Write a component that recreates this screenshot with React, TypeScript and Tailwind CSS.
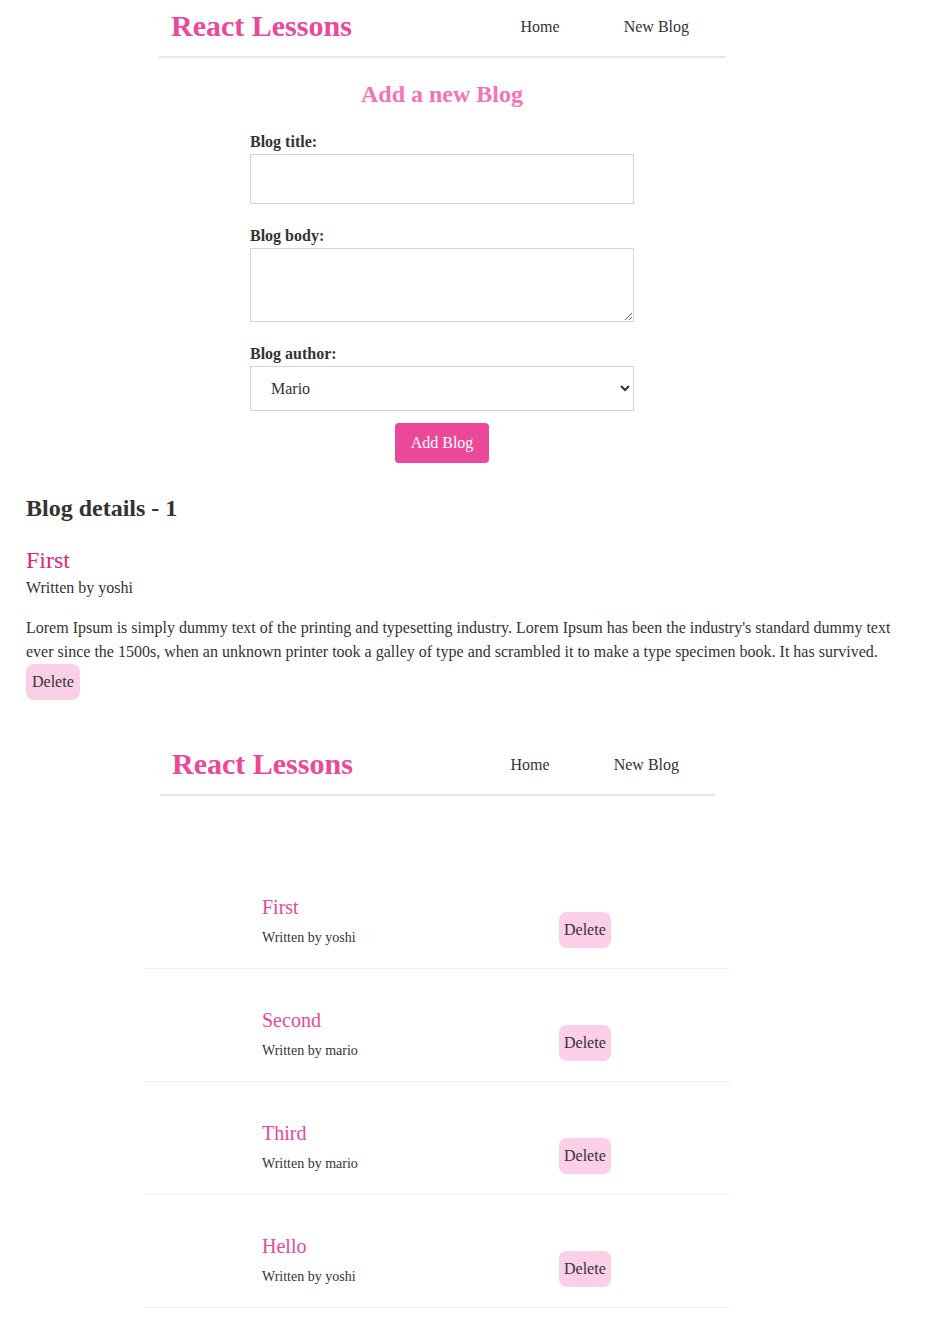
import React from "react";

type NavProps = { frame: string };

function Navbar({ frame }: NavProps) {
  return (
    <nav className={`flex items-center h-[58px] border-b-2 border-[#e5e7eb] pl-[12px] pr-[36px] ${frame}`}>
      <h1 className="text-[30px] leading-[36px] font-bold text-[#ec4899] -mt-[4px]">React Lessons</h1>
      <div className="ml-auto flex gap-[64px] text-[16px] text-[#333] -mt-[3px]">
        <a href="#">Home</a>
        <a href="#">New Blog</a>
      </div>
    </nav>
  );
}

const blogs = [
  { id: 1, title: "First", author: "yoshi" },
  { id: 2, title: "Second", author: "mario" },
  { id: 3, title: "Third", author: "mario" },
  { id: 4, title: "Hello", author: "yoshi" },
];

const body =
  "Lorem Ipsum is simply dummy text of the printing and typesetting industry. Lorem Ipsum has been the industry's standard dummy text ever since the 1500s, when an unknown printer took a galley of type and scrambled it to make a type specimen book. It has survived.";

export default function App() {
  return (
    <div className="bg-white text-[#333] font-['Liberation_Serif',serif] pb-[16px]">
      {/* Create page */}
      <Navbar frame="ml-[159px] w-[566px]" />
      <div className="ml-[159px] w-[566px]">
        <h2 className="text-center text-[24px] leading-[28px] font-bold text-[#f472b6] mt-[22px] mb-[22px]">
          Add a new Blog
        </h2>
        <form className="w-[384px] mx-auto flex flex-col">
          <label className="font-bold text-[16px] leading-[24px]">Blog title:</label>
          <input type="text" className="h-[50px] border border-[#d1d5db] px-[10px] outline-none" />
          <label className="font-bold text-[16px] leading-[24px] mt-[20px]">Blog body:</label>
          <textarea className="h-[74px] border border-[#d1d5db] px-[10px] outline-none" />
          <label className="font-bold text-[16px] leading-[24px] mt-[20px]">Blog author:</label>
          <select className="h-[45px] border border-[#d1d5db] pl-[16px] pr-[6px] text-[16px] outline-none bg-white">
            <option>Mario</option>
            <option>Yoshi</option>
          </select>
          <button
            type="button"
            className="mt-[12px] mx-auto w-[94px] h-[40px] rounded-[4px] bg-[#ec4899] text-white text-[16px]"
          >
            Add Blog
          </button>
        </form>
      </div>

      {/* Blog details */}
      <div className="pl-[26px] pr-[52px] mt-[29px]">
        <h2 className="text-[24px] leading-[32px] font-bold">Blog details - 1</h2>
        <article className="mt-[20px]">
          <h2 className="text-[24px] leading-[32px] text-[#db2777]">First</h2>
          <div className="text-[16px] leading-[24px]">Written by yoshi</div>
          <p className="mt-[16px] text-[16px] leading-[24px]">{body}</p>
          <button type="button" className="h-[36px] px-[6px] rounded-[8px] bg-[#fbcfe8] text-[16px]">
            Delete
          </button>
        </article>
      </div>

      {/* Home page */}
      <Navbar frame="ml-[160px] w-[555px] mt-[38px]" />
      <div className="ml-[144px] w-[586px] mt-[60px]">
        {blogs.map((b) => (
          <div key={b.id} className="flex h-[113px] border-b border-[#f0f0f0] pl-[118px] pt-[39px]">
            <div className="w-[297px]">
              <h2 className="text-[20px] leading-[24px] text-[#ec4899]">{b.title}</h2>
              <p className="mt-[10px] text-[14px] leading-[18px]">Written by {b.author}</p>
            </div>
            <div>
              <button type="button" className="mt-[17px] h-[36px] px-[5px] rounded-[8px] bg-[#fbcfe8] text-[16px]">
                Delete
              </button>
            </div>
          </div>
        ))}
      </div>
    </div>
  );
}
